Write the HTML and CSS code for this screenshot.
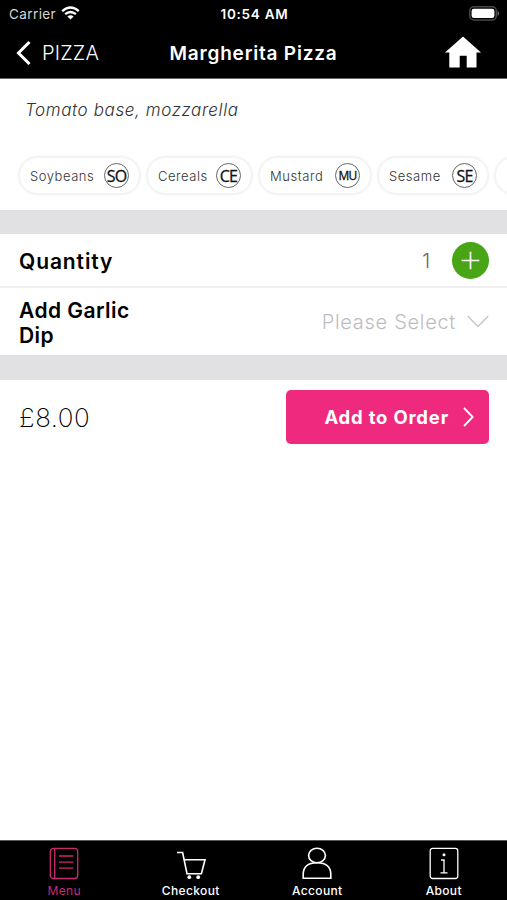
FILE: index.html
```
<!DOCTYPE html>
<html lang="en">
<head>
<meta charset="utf-8">
<title>Margherita Pizza</title>
<link rel="stylesheet" href="styles.css">
</head>
<body>
<div class="app">
  <header class="header">
    <div class="status">
      <div class="carrier"><span>Carrier</span>
        <svg width="19" height="14" viewBox="0 0 19 14" fill="none" stroke="#fff" stroke-width="2.3"><path d="M1.2 5.1Q9.5-2 17.8 5.1M4.1 8.2Q9.5 3.7 14.9 8.2"/><path d="M9.5 13.6 6.4 10.5Q9.5 8 12.6 10.5Z" fill="#fff" stroke="none"/></svg>
      </div>
      <div class="time">10:54 AM</div>
      <svg class="battery" width="31" height="15" viewBox="0 0 31 15"><rect x=".8" y=".8" width="26.5" height="13.2" rx="4" fill="none" stroke="#48484a" stroke-width="1.5"/><rect x="2.6" y="2.7" width="22.8" height="9.4" rx="2.3" fill="#fff"/><path d="M28.5 5v5q1.7-.7 1.7-2.5T28.5 5" fill="#68686a"/></svg>
    </div>
    <nav class="nav">
      <div class="back"><svg width="15" height="24" viewBox="0 0 15 24" fill="none" stroke="#fff" stroke-width="3"><path d="M13.5 1 2.5 12l11 11"/></svg><span>PIZZA</span></div>
      <h1>Margherita Pizza</h1>
      <svg class="home" width="36" height="32" viewBox="0 0 36 32" fill="#fff"><path d="M18 .5 36 16.5h-4.5v15h-9.8V19.7h-7v11.8H4.3v-15H0z"/></svg>
    </nav>
  </header>
  <main>
    <p class="description">Tomato base, mozzarella</p>
    <div class="chips">
      <div class="chip soy"><span class="name">Soybeans</span><span class="code">SO</span></div>
      <div class="chip cereal"><span class="name">Cereals</span><span class="code">CE</span></div>
      <div class="chip mustard"><span class="name">Mustard</span><span class="code small">MU</span></div>
      <div class="chip sesame"><span class="name">Sesame</span><span class="code">SE</span></div>
      <div class="chip more"></div>
    </div>
    <div class="band"></div>
    <section class="row quantity"><h2>Quantity</h2><span class="count">1</span>
      <svg width="37" height="37" viewBox="0 0 37 37"><circle cx="18.5" cy="18.5" r="18.5" fill="#48a616"/><path d="M9.7 18.5h17.6M18.5 9.7v17.6" stroke="#fff" stroke-width="1.7"/></svg>
    </section>
    <section class="row extra"><h2>Add Garlic<br>Dip</h2><span class="select">Please Select</span>
      <svg width="22" height="13" viewBox="0 0 22 13" fill="none" stroke="#c7c7cb" stroke-width="1.4"><path d="M.7 1 11 11.5 21.3 1"/></svg>
    </section>
    <div class="band lower"></div>
    <section class="order"><span class="price">£8.00</span>
      <div class="button"><span>Add to Order</span><svg width="11" height="20" viewBox="0 0 11 20" fill="none" stroke="#fff" stroke-width="1.8"><path d="m1 1 8.7 9L1 19"/></svg></div>
    </section>
  </main>
  <footer class="tabs">
    <div class="tab active"><svg width="30" height="33" viewBox="0 0 30 33" fill="none" stroke="currentColor" stroke-width="1.3"><rect x="1.3" y="1.3" width="27.4" height="30.2" rx="3"/><path d="M5.7 1.3v30.2M10 9h14.3M10 15.2h14.3M10 21.2h14.3"/></svg><span>Menu</span></div>
    <div class="tab"><svg width="30" height="33" viewBox="0 0 30 33" fill="none" stroke="currentColor" stroke-width="1.6"><path d="M1 5.5h5.6L11 26.7h14.4L29 12.8H8.3"/><circle cx="13.3" cy="30.2" r="1.9" fill="currentColor" stroke="none"/><circle cx="22.2" cy="30.2" r="1.9" fill="currentColor" stroke="none"/></svg><span>Checkout</span></div>
    <div class="tab"><svg width="30" height="33" viewBox="0 0 30 33" fill="none" stroke="currentColor" stroke-width="1.6"><ellipse cx="15" cy="8.5" rx="8.4" ry="7.3"/><path d="M1.2 31.3v-3.8C1.2 20 6 15.8 15 15.8S28.8 20 28.8 27.5v3.8z"/></svg><span>Account</span></div>
    <div class="tab"><svg width="30" height="33" viewBox="0 0 30 33" fill="none" stroke="currentColor" stroke-width="1.3"><rect x="1.2" y="1.3" width="27.6" height="30.2" rx="2.5"/><path d="M12 13h3v12.8M11.5 25.8h7"/><circle cx="15" cy="7.8" r="1.5" fill="currentColor" stroke="none"/></svg><span>About</span></div>
  </footer>
</div>
</body>
</html>
```

FILE: styles.css
```
* { box-sizing: border-box; }
body { margin: 0; background: #fff; color: #000; font-family: Inter, "Liberation Sans", sans-serif; }
h1, h2, p { margin: 0; }
svg { display: block; flex: none; }
.app { width: 507px; height: 900px; display: flex; flex-direction: column; overflow: hidden; white-space: nowrap; }
main { flex: 1; }
.header { height: 79px; background: #000; color: #fff; border-bottom: 1px solid #666; }
.status { height: 27px; display: grid; grid-template-columns: 1fr auto 1fr; align-items: center; padding: 0 7px 0 9px; }
.carrier { display: flex; align-items: center; gap: 5px; color: #d4d4d4; font-size: 13.5px; letter-spacing: .4px; }
.carrier svg { margin-top: -2px; }
.time { font-size: 13.5px; font-weight: 600; letter-spacing: .75px; }
.battery { justify-self: end; }
.nav { height: 51px; display: grid; grid-template-columns: 1fr auto 1fr; align-items: center; padding: 0 26px 0 16px; }
.nav { padding: 1px 16px 0; }
.back { display: flex; align-items: center; gap: 11px; font-size: 20px; font-weight: 300; letter-spacing: .2px; }
h1 { font-size: 19px; font-weight: 600; letter-spacing: .8px; }
.home { justify-self: end; margin: -3px 10px 0 0; }
.description { height: 78px; padding: 20px 25px; line-height: 22px; font-size: 17px; font-style: italic; font-weight: 300; letter-spacing: .6px; color: #333; }
.chips { display: flex; gap: 7px; padding: 0 0 0 19px; margin-top: -3px; padding-top: 3px; height: 56px; overflow: hidden; }
.chip { flex: none; height: 37px; border-radius: 19px; border: 1px solid #f3f3f3; box-shadow: 0 0 3px #ddd; display: flex; align-items: center; justify-content: space-between; padding: 0 10px; font-size: 13px; font-weight: 300; letter-spacing: .55px; color: #333; }
.soy { width: 121px; }
.cereal { width: 105px; }
.mustard { width: 112px; }
.sesame { width: 110px; }
.more { width: 80px; }
.code { width: 25px; height: 25px; border: 1px solid #666; border-radius: 50%; display: flex; align-items: center; justify-content: center; font: 400 16px "Open Sans", sans-serif; letter-spacing: -.8px; color: #111; -webkit-text-stroke: .3px #111; }
.code.small { font-size: 12px; }
.band { height: 24px; background: #e1e1e3; }
.band.lower { height: 25px; }
.row { display: flex; align-items: center; padding: 0 18px 0 19px; }
.quantity { height: 54px; border-bottom: 2px solid #f0f0f0; }
.extra { height: 67px; }
h2 { flex: 1; font-size: 21px; line-height: 25px; font-weight: 600; letter-spacing: .45px; }
.quantity h2 { letter-spacing: .9px; padding-top: 2px; }
.extra h2 { padding-top: 2px; }
.count { font-size: 20px; font-weight: 300; color: #666; margin-right: 22px; padding-top: 1px; }
.select { font-size: 20px; font-weight: 300; color: #bdbdc1; letter-spacing: .7px; margin-right: 11px; }
.order { display: flex; align-items: center; justify-content: space-between; height: 74px; padding: 0 18px 0 19px; }
.price { font-size: 26px; font-weight: 200; letter-spacing: .5px; }
.button { width: 203px; height: 54px; border-radius: 5px; background: #ef297d; color: #fff; display: flex; align-items: center; justify-content: flex-end; gap: 14px; padding-right: 15px; font-size: 18.5px; font-weight: 700; letter-spacing: .8px; }
.tabs { height: 60px; background: #000; border-top: 1px solid #555; color: #fff; display: grid; grid-template-columns: repeat(4, 1fr); padding-left: 1px; }
.tab { display: flex; flex-direction: column; align-items: center; padding-top: 6px; gap: 3px; font-size: 12px; line-height: 16px; font-weight: 500; letter-spacing: .35px; }
.active { color: #c92a70; font-weight: 400; }
```
